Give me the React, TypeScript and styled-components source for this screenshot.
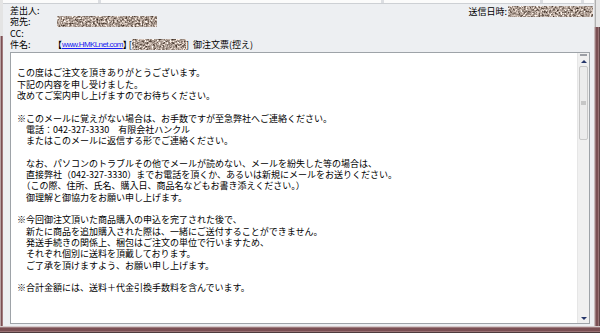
import React, { useId } from 'react';
import styled, { createGlobalStyle } from 'styled-components';

const GlobalStyle = createGlobalStyle`
  html, body {
    margin: 0;
    padding: 0;
    background: #edeff2;
  }
  body {
    font-family: "Noto Sans CJK JP", "Liberation Sans", sans-serif;
    font-size: 9px;
    color: #000;
  }
`;

const LINE = '11.3px';

const bodyLines = [
  '',
  'この度はご注文を頂きありがとうございます。',
  '下記の内容を申し受けました。',
  '改めてご案内申し上げますのでお待ちください。',
  '',
  '※このメールに覚えがない場合は、お手数ですが至急弊社へご連絡ください。',
  '　電話：042-327-3330　有限会社ハンクル',
  '　またはこのメールに返信する形でご連絡ください。',
  '',
  '　なお、パソコンのトラブルその他でメールが読めない、メールを紛失した等の場合は、',
  '　直接弊社（042-327-3330）までお電話を頂くか、あるいは新規にメールをお送りください。',
  '　（この際、住所、氏名、購入日、商品名などもお書き添えください。）',
  '　御理解と御協力をお願い申し上げます。',
  '',
  '※今回御注文頂いた商品購入の申込を完了された後で、',
  '　新たに商品を追加購入された際は、一緒にご送付することができません。',
  '　発送手続きの関係上、梱包はご注文の単位で行いますため、',
  '　それぞれ個別に送料を頂戴しております。',
  '　ご了承を頂けますよう、お願い申し上げます。',
  '',
  '※合計金額には、送料＋代金引換手数料を含んでいます。',
];

// mosaic used to hide addresses / dates
const Redacted = ({ width, height, seed }: { width: number; height: number; seed: number }) => {
  const id = useId().replace(/:/g, '');
  return (
    <Mask width={width} height={height}>
      <svg width={width} height={height}>
        <filter id={`n${id}`} x="0" y="0" width="100%" height="100%" colorInterpolationFilters="sRGB">
          <feTurbulence type="fractalNoise" baseFrequency="0.55" numOctaves="3" seed={seed} />
          <feColorMatrix
            type="matrix"
            values="1.4 0 0 0 -0.02  1.4 0 0 0 -0.08  1.4 0 0 0 -0.12  0 0 0 0 1"
          />
        </filter>
        <rect width={width} height={height} filter={`url(#n${id})`} />
      </svg>
    </Mask>
  );
};

export default function App() {
  return (
    <>
      <GlobalStyle />
      <Window>
        <Middle>
          <LeftEdge />
          <Main>
            <TopStrip>
              <StripCell width={95} />
              <StripCell width={280} />
              <StripCell width={156} />
              <StripCell width={38} />
              <StripCell width={14} />
            </TopStrip>
            <Fields>
              <FieldRow>
                <Label>差出人:</Label>
                <Value />
                <DateBox>
                  送信日時:
                  <Redacted width={85} height={11} seed={7} />
                </DateBox>
              </FieldRow>
              <FieldRow>
                <Label>宛先:</Label>
                <Value>
                  <Redacted width={100} height={11} seed={3} />
                </Value>
              </FieldRow>
              <FieldRow>
                <Label>CC:</Label>
                <Value />
              </FieldRow>
              <FieldRow>
                <Label>件名:</Label>
                <Value>
                  <Bracket side="open">【</Bracket>
                  <Link>www.HMKLnet.com</Link>
                  <Bracket side="close">】</Bracket>[
                  <Redacted width={54} height={11} seed={11} />
                  ]&nbsp;&nbsp;御注文票(控え)
                </Value>
              </FieldRow>
            </Fields>
            <BodyBox>
              <BodyText>
                {bodyLines.map((l, i) => (
                  <Line key={i}>{l || '\u00a0'}</Line>
                ))}
              </BodyText>
              <ScrollBar>
                <Grip />
                <ArrowButton>
                  <Arrow dir="up" />
                </ArrowButton>
                <Thumb>
                  <ThumbGrip />
                </Thumb>
                <Track />
                <ArrowButton>
                  <Arrow dir="down" />
                </ArrowButton>
              </ScrollBar>
            </BodyBox>
          </Main>
          <RightEdge />
        </Middle>
        <BottomEdge />
      </Window>
    </>
  );
}

const Window = styled.div`
  display: flex;
  flex-direction: column;
  width: 600px;
  height: 333px;
  overflow: hidden;
  background: #edeff2;
`;

const Middle = styled.div`
  display: flex;
  flex: 1;
  min-height: 0;
`;

const LeftEdge = styled.div`
  width: 3px;
  background:
    linear-gradient(#e4e4e4, #e4e4e4) top / 100% 36px no-repeat,
    linear-gradient(to right, #b9a2a4 0 1px, #7c5054 1px 2px, #a07a7d 2px 3px);
`;

const RightEdge = styled.div`
  width: 6px;
  background:
    linear-gradient(to right, #d8d8d8 0 1px, #b0b0b0 1px 2px, #e6e6e6 2px) top / 100% 27px no-repeat,
    linear-gradient(to right, #c9bbbc 0 1px, #9a7a7d 1px 2px, #7a4f53 2px 4px, #9a7376 4px 5px, #5f4447 5px 6px);
`;

const BottomEdge = styled.div`
  height: 7px;
  background: linear-gradient(#d6cbcc 0 1px, #9c7a7d 1px 2px, #7a4f53 2px 5px, #9a7376 5px 6px, #4d3b3d 6px 7px);
`;

const Main = styled.div`
  display: flex;
  flex-direction: column;
  flex: 1;
  min-width: 0;
`;

const TopStrip = styled.div`
  display: flex;
  height: 3px;
  gap: 3px;
  background: #dcdee2;
  border-bottom: 1px solid #cdd0d4;
`;

const StripCell = styled.div<{ width: number }>`
  width: ${p => p.width}px;
  background: #fbfbfb;
  &:last-child {
    flex: 1;
  }
`;

const Fields = styled.div`
  display: flex;
  flex-direction: column;
  padding: 1px 1px 0 7px;
`;

const FieldRow = styled.div`
  display: flex;
  align-items: center;
  height: ${LINE};
  white-space: nowrap;
`;

const Label = styled.span`
  width: 47px;
  flex: none;
`;

const Value = styled.span`
  display: flex;
  align-items: center;
  flex: 1;
`;

const DateBox = styled.span`
  display: flex;
  align-items: center;
  gap: 1px;
  margin-top: 1px;
`;

const Mask = styled.span<{ width: number; height: number }>`
  display: inline-flex;
  width: ${p => p.width}px;
  height: ${p => p.height}px;
  svg {
    display: block;
  }
`;

const Bracket = styled.span<{ side: 'open' | 'close' }>`
  ${p => (p.side === 'open' ? 'margin-left: -4px;' : 'margin-right: -3px;')}
`;

const Link = styled.span`
  font-family: "Liberation Sans", sans-serif;
  font-size: 8px;
  letter-spacing: -0.6px;
  color: #1b1bf0;
  text-decoration: underline;
`;

const BodyBox = styled.div`
  display: flex;
  flex: 1;
  margin: 2px 4px 2px 7px;
  background: #fff;
  border: 1px solid #9ea3a8;
  min-height: 0;
`;

const BodyText = styled.div`
  flex: 1;
  padding: 3px 6px;
  line-height: ${LINE};
  white-space: pre;
  overflow: hidden;
`;

const Line = styled.div`
  height: ${LINE};
`;

const ScrollBar = styled.div`
  display: flex;
  flex-direction: column;
  width: 11px;
  background: #f0f0f0;
  border-left: 1px solid #e6e6e6;
`;

const Grip = styled.div`
  height: 2px;
  margin: 1px 2px 0;
  background: #9b9ea4;
`;

const ArrowButton = styled.div`
  display: flex;
  align-items: center;
  justify-content: center;
  height: 10px;
`;

const Arrow = styled.div<{ dir: 'up' | 'down' }>`
  width: 0;
  height: 0;
  border-left: 3px solid transparent;
  border-right: 3px solid transparent;
  ${p =>
    p.dir === 'up'
      ? 'border-bottom: 3px solid #26366a;'
      : 'border-top: 3px solid #26366a;'}
`;

const Thumb = styled.div`
  display: flex;
  align-items: center;
  justify-content: center;
  height: 72px;
  margin: 0 1px;
  background: #ececec;
  border: 1px solid #c8c8c8;
  border-radius: 2px;
`;

const ThumbGrip = styled.div`
  width: 5px;
  height: 4px;
  background: #c6c6c6;
`;

const Track = styled.div`
  flex: 1;
`;
